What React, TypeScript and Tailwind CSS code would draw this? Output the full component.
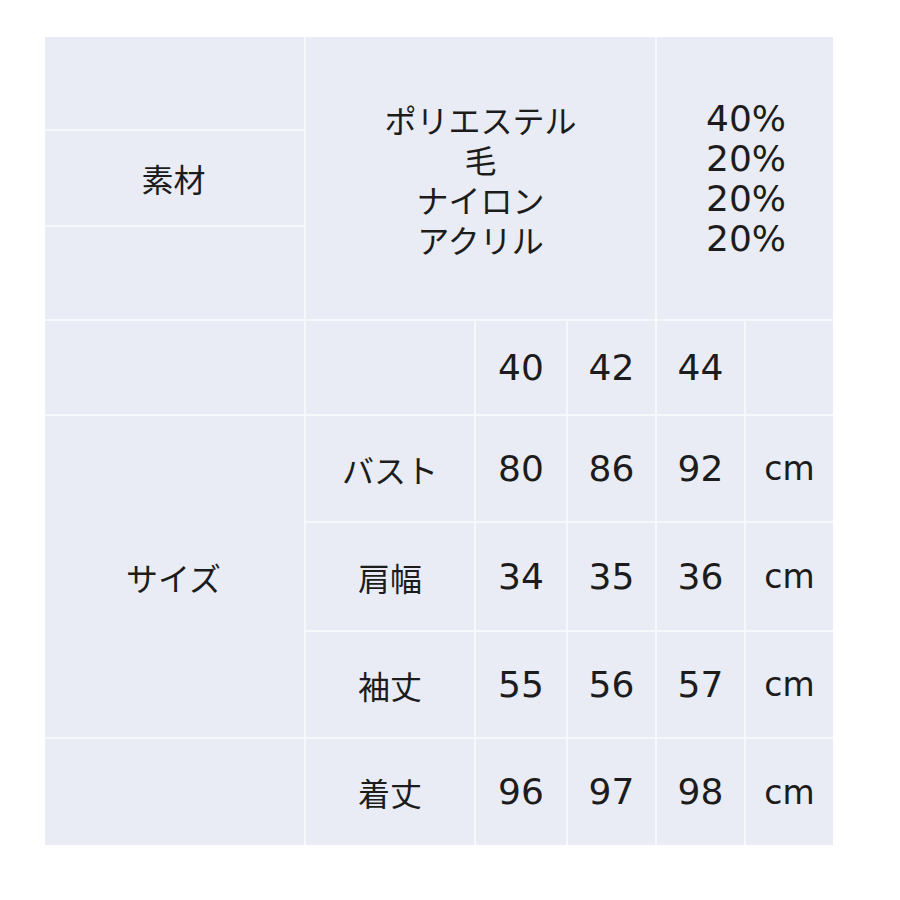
const jp = "font-['Noto_Sans_CJK_JP',sans-serif] text-[32px]";
const num = "font-['DejaVu_Sans',sans-serif] text-[36px]";

function Cell({
  children,
  className = "leading-none",
  font = num,
}: {
  children?: React.ReactNode;
  className?: string;
  font?: string;
}) {
  return (
    <div
      className={`bg-[#e9ecf4] flex items-center justify-center text-[#1c1c1c] ${font} ${className}`}
    >
      {children}
    </div>
  );
}

const sizes = ["40", "42", "44"];

const rows = [
  { label: "バスト", vals: ["80", "86", "92"] },
  { label: "肩幅", vals: ["34", "35", "36"] },
  { label: "袖丈", vals: ["55", "56", "57"] },
  { label: "着丈", vals: ["96", "97", "98"] },
];

export default function App() {
  return (
    <div className="w-[900px] h-[900px] bg-white pt-[37px] pl-[45px]">
      <div className="grid w-[788px] grid-cols-[259px_168px_90px_87px_87px_87px] grid-rows-[92px_94px_92px_93px_105px_107px_105px_106px] gap-[2px] bg-[#f7f8fb]">
        {/* 素材 block */}
        <Cell className="col-start-1 row-start-1" />
        <Cell font={jp} className="col-start-1 row-start-2 pr-[2px] leading-none">
          素材
        </Cell>
        <Cell className="col-start-1 row-start-3" />
        <Cell
          font={jp}
          className="col-start-2 col-span-3 row-start-1 row-span-3 flex-col leading-[40px] pt-[2px]"
        >
          <span>ポリエステル</span>
          <span>毛</span>
          <span>ナイロン</span>
          <span>アクリル</span>
        </Cell>
        <Cell className="col-start-5 col-span-2 row-start-1 row-span-3 flex-col leading-[40px] pt-[2px] pl-[2px]">
          <span>40%</span>
          <span>20%</span>
          <span>20%</span>
          <span>20%</span>
        </Cell>

        {/* size header */}
        <Cell className="col-start-1 row-start-4" />
        <Cell className="col-start-2 row-start-4" />
        {sizes.map((s) => (
          <Cell key={s} className="row-start-4 leading-none">
            {s}
          </Cell>
        ))}
        <Cell className="row-start-4" />

        <Cell font={jp} className="col-start-1 row-start-5 row-span-3 pr-[2px] leading-none">
          サイズ
        </Cell>
        <Cell className="col-start-1 row-start-8" />

        {rows.map((r, i) => (
          <div key={r.label} className="contents">
            <Cell
              font={jp}
              className={`col-start-2 leading-none ${["row-start-5", "row-start-6", "row-start-7", "row-start-8"][i]}`}
            >
              {r.label}
            </Cell>
            {r.vals.map((v, j) => (
              <Cell key={j}>{v}</Cell>
            ))}
            <Cell className="leading-none !text-[33px]">cm</Cell>
          </div>
        ))}
      </div>
    </div>
  );
}
